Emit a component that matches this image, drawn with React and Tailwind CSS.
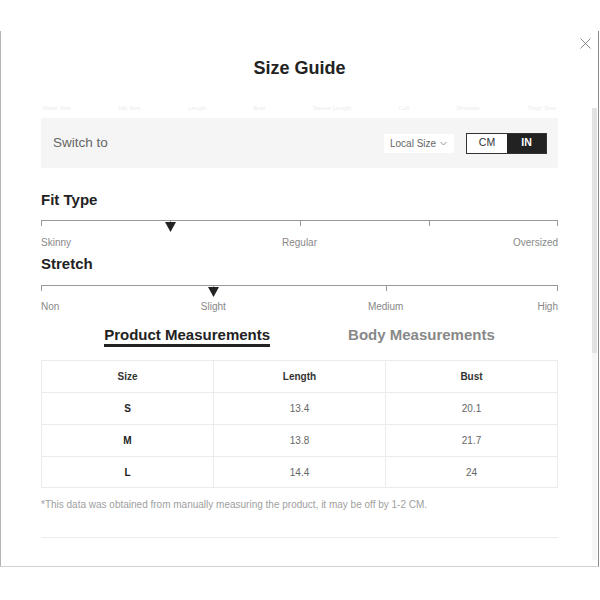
import React from "react";

function Tick({ left }) {
  return <div className="absolute top-0 w-px h-[5px] bg-[#999]" style={{ left }} />;
}

function Pointer({ left }) {
  return (
    <svg className="absolute top-[1px]" style={{ left: `calc(${left} - 5px)` }} width="11" height="10" viewBox="0 0 11 10">
      <polygon points="0,0 11,0 5.5,10" fill="#222" />
    </svg>
  );
}

function Slider({ ticks, pointer }) {
  return (
    <div className="relative h-[12px] border-t border-[#999]">
      {ticks.map((t, i) => (
        <Tick key={i} left={t} />
      ))}
      <Pointer left={pointer} />
    </div>
  );
}

export default function App() {
  const rows = [
    ["S", "13.4", "20.1"],
    ["M", "13.8", "21.7"],
    ["L", "14.4", "24"],
  ];
  const heights = ["h-[32px]", "h-[32px]", "h-[31px]"];
  return (
    <div className="w-[600px] h-[600px] bg-white pt-[31px] font-['Liberation_Sans',Arial,sans-serif] overflow-hidden">
      <div className="relative w-[599px] h-[536px] border-l border-r border-b border-l-[#b4b4b4] border-r-[#8c8c8c] border-b-[#d2d2d2] flex flex-col">
        <svg className="absolute left-[579px] top-[7px]" width="11" height="11" viewBox="0 0 11 11">
          <path d="M0.5 0.5 L10.5 10.5 M10.5 0.5 L0.5 10.5" stroke="#8a8a8a" strokeWidth="1" />
        </svg>
        <div className="h-[73px] pt-[27px] text-center">
          <h1 className="text-[18px] leading-[21px] font-bold text-[#222]">Size Guide</h1>
        </div>
        <div className="flex flex-1 min-h-0">
          <div className="w-[591px] pl-[40px] pr-[34px] overflow-hidden">
            <div className="h-[8px] flex justify-between items-end text-[6px] leading-[7px] text-[#ececec] px-[2px]">
              <span>Waist Size</span>
              <span>Hip Size</span>
              <span>Length</span>
              <span>Bust</span>
              <span>Sleeve Length</span>
              <span>Cuff</span>
              <span>Shoulder</span>
              <span>Thigh Size</span>
            </div>
            <div className="mt-[6px] h-[50px] bg-[#f5f5f5] flex items-center justify-between pl-[12px] pr-[11px]">
              <span className="text-[13.5px] text-[#666]">Switch to</span>
              <div className="flex items-center gap-[12px]">
                <div className="w-[70px] h-[19px] bg-white flex items-center pl-[6px] gap-[4px] text-[10px] text-[#666]">
                  <span>Local Size</span>
                  <svg width="7" height="5" viewBox="0 0 7 5">
                    <path d="M0.5 1 L3.5 4 L6.5 1" fill="none" stroke="#888" strokeWidth="0.9" />
                  </svg>
                </div>
                <div className="flex w-[81px] h-[21px] border border-[#333] text-[10.5px]">
                  <div className="w-[40px] bg-white text-[#333] flex items-center justify-center">CM</div>
                  <div className="flex-1 bg-[#222] text-white font-bold flex items-center justify-center">IN</div>
                </div>
              </div>
            </div>

            <div className="mt-[23px] text-[15px] leading-[18px] font-bold text-[#222]">Fit Type</div>
            <div className="mt-[11px]">
              <Slider ticks={["0px", "25%", "50%", "75%", "calc(100% - 1px)"]} pointer="25%" />
            </div>
            <div className="mt-[5px] grid grid-cols-4 text-[10px] leading-[12px] text-[#888]">
              <span className="text-left">Skinny</span>
              <span className="col-span-2 text-center">Regular</span>
              <span className="text-right">Oversized</span>
            </div>

            <div className="mt-[6px] text-[15px] leading-[18px] font-bold text-[#222]">Stretch</div>
            <div className="mt-[12px]">
              <Slider ticks={["0px", "33.33%", "66.67%", "calc(100% - 1px)"]} pointer="33.33%" />
            </div>
            <div className="mt-[4px] grid grid-cols-6 text-[10px] leading-[12px] text-[#888]">
              <span className="text-left">Non</span>
              <span className="col-span-2 text-center">Slight</span>
              <span className="col-span-2 text-center">Medium</span>
              <span className="text-right">High</span>
            </div>

            <div className="mt-[13px] flex justify-center gap-[78px] text-[15px] leading-[18px] font-bold">
              <span className="text-[#222] border-b-[3px] border-[#222]">Product Measurements</span>
              <span className="text-[#888]">Body Measurements</span>
            </div>

            <div className="mt-[13px] border-l border-t border-[#ebebeb]">
              <div className="grid grid-cols-3 h-[32px] text-[10px] font-bold text-[#333]">
                {["Size", "Length", "Bust"].map((h) => (
                  <div key={h} className="flex items-center justify-center border-r border-b border-[#ebebeb]">
                    {h}
                  </div>
                ))}
              </div>
              {rows.map((r, i) => (
                <div key={r[0]} className={`grid grid-cols-3 ${heights[i]} text-[10px]`}>
                  <div className="flex items-center justify-center border-r border-b border-[#ebebeb] font-bold text-[#222]">{r[0]}</div>
                  <div className="flex items-center justify-center border-r border-b border-[#ebebeb] text-[#666]">{r[1]}</div>
                  <div className="flex items-center justify-center border-r border-b border-[#ebebeb] text-[#666]">{r[2]}</div>
                </div>
              ))}
            </div>

            <p className="mt-[11px] text-[10px] leading-[12px] text-[#a0a0a0]">
              *This data was obtained from manually measuring the product, it may be off by 1-2 CM.
            </p>
            <div className="mt-[26px] border-t border-[#ececec]" />
          </div>
          <div className="w-[5px] pt-[4px] pb-[6px] flex flex-col">
            <div className="flex-1 bg-[#f6f6f6] flex flex-col">
              <div className="h-[245px] bg-[#e3e3e3]" />
            </div>
          </div>
        </div>
      </div>
    </div>
  );
}
